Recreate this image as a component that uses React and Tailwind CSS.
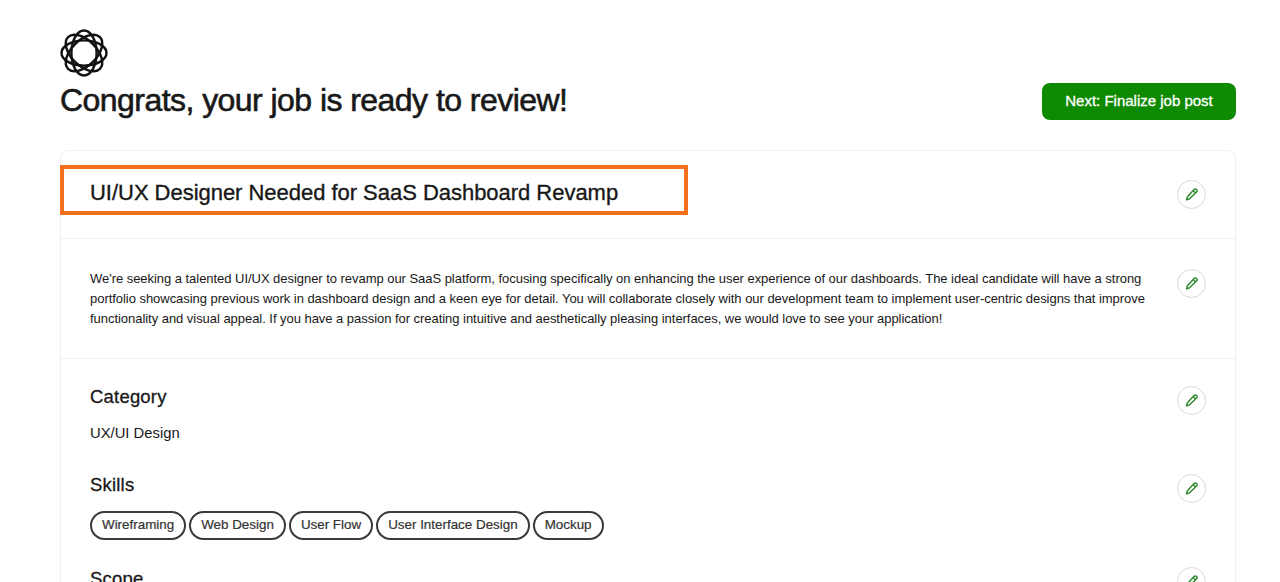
const Pencil = () => (
  <svg width="15" height="15" viewBox="0 0 14 14" fill="none" stroke="#2f8a2f" strokeWidth="1.4" strokeLinejoin="round">
    <path d="M3.2 9 L9.6 2.2 a1.3 1.3 0 0 1 1.9 0 l0.4 0.4 a1.3 1.3 0 0 1 0 1.9 L5.2 11 L2.4 12 Z" />
    <path d="M8.6 3.3 L10.9 5.6" />
  </svg>
);

const EditButton = ({ className = "" }) => (
  <button className={`flex h-[29px] w-[29px] shrink-0 items-center justify-center rounded-full border border-[#d9d9d9] bg-white ${className}`}>
    <Pencil />
  </button>
);

const Logo = () => (
  <svg width="48" height="48" viewBox="0 0 48 48" fill="none" stroke="#111" strokeWidth="2.4">
    <ellipse cx="24" cy="24" rx="22.5" ry="12.6" />
    <ellipse cx="24" cy="24" rx="22.5" ry="12.6" transform="rotate(45 24 24)" />
    <ellipse cx="24" cy="24" rx="22.5" ry="12.6" transform="rotate(90 24 24)" />
    <ellipse cx="24" cy="24" rx="22.5" ry="12.6" transform="rotate(135 24 24)" />
  </svg>
);

const skills = ["Wireframing", "Web Design", "User Flow", "User Interface Design", "Mockup"];

export default function App() {
  return (
    <div className="relative h-[582px] overflow-hidden bg-white pl-[60px] pr-[44px] pt-[29px] font-['Liberation_Sans',Arial,sans-serif] text-[#181818]">
      <Logo />
      <div className="mt-[2px] flex items-start justify-between">
        <h1 className="pb-[2px] text-[32px] leading-[42px] tracking-[-0.55px] [-webkit-text-stroke:0.6px_#181818]">Congrats, your job is ready to review!</h1>
        <button className="mt-[4px] h-[37px] w-[194px] rounded-lg bg-[#0e8a00] text-[15px] text-white [-webkit-text-stroke:0.3px_#ffffff]">Next: Finalize job post</button>
      </div>

      <div className="relative mt-[27px] rounded-t-lg border border-b-0 border-[#f0f0f0]">
        <div className="flex h-[88px] items-center justify-between border-b border-[#f0f0f0] px-[29px]">
          <h2 className="pb-[4px] text-[22px] tracking-[-0.03px] [-webkit-text-stroke:0.35px_#181818]">UI/UX Designer Needed for SaaS Dashboard Revamp</h2>
          <EditButton />
        </div>
        <div className="flex h-[120px] items-start justify-between border-b border-[#f0f0f0] px-[29px] pt-[30px]">
          <p className="w-[1068px] text-[13px] leading-[20px] tracking-[-0.04px]">
            We're seeking a talented UI/UX designer to revamp our SaaS platform, focusing specifically on enhancing the user experience of our dashboards. The ideal candidate will have a strong portfolio showcasing previous work in dashboard design and a keen eye for detail. You will collaborate closely with our development team to implement user-centric designs that improve functionality and visual appeal. If you have a passion for creating intuitive and aesthetically pleasing interfaces, we would love to see your application!
          </p>
          <EditButton />
        </div>
        <div className="px-[29px] pt-[26px]">
          <div className="flex h-[88px] items-start justify-between">
            <div>
              <h3 className="text-[18.5px] leading-[24px] tracking-[0.2px] [-webkit-text-stroke:0.3px_#181818]">Category</h3>
              <p className="mt-[14px] text-[14.8px] leading-[20px]">UX/UI Design</p>
            </div>
            <EditButton className="mt-[1px]" />
          </div>
          <div className="flex h-[94px] items-start justify-between">
            <div>
              <h3 className="text-[18.5px] leading-[24px] tracking-[0.2px] [-webkit-text-stroke:0.3px_#181818]">Skills</h3>
              <div className="mt-[14px] flex gap-[3px]">
                {skills.map((s) => (
                  <span key={s} className="flex h-[29px] items-center rounded-full border-2 border-[#3a3a3a] px-[10px] text-[13.4px] text-[#333] [-webkit-text-stroke:0.2px_#333333]">{s}</span>
                ))}
              </div>
            </div>
            <EditButton className="mt-[1px]" />
          </div>
          <div className="flex items-start justify-between">
            <h3 className="text-[18.5px] leading-[24px] tracking-[0.2px] [-webkit-text-stroke:0.3px_#181818]">Scope</h3>
            <EditButton />
          </div>
        </div>
        <div className="absolute left-[-1px] top-[14px] h-[50px] w-[628px] border-4 border-[#f2711c]" />
      </div>
    </div>
  );
}
